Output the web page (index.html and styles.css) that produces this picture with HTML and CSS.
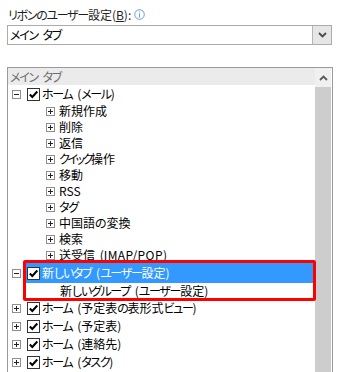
FILE: index.html
```html
<!DOCTYPE html>
<html lang="ja">
<head>
<meta charset="utf-8">
<link rel="stylesheet" href="styles.css">
</head>
<body>
<div class="panel">
  <div class="label-row">
    <span><span class="k">リボンのユーザー</span>設定(<u>B</u>):</span>
    <svg class="info" width="11" height="11" viewBox="0 0 11 11"><circle cx="5.5" cy="5.5" r="4.8" fill="none" stroke="#6c9ad6" stroke-width="1"/><rect x="5" y="2.5" width="1" height="1" fill="#6c9ad6"/><rect x="5" y="4.5" width="1" height="4" fill="#6c9ad6"/></svg>
  </div>
  <div class="combo">
    <span class="combo-text"><span class="k">メイン</span> <span class="k">タブ</span></span>
    <span class="combo-btn"><svg width="9" height="6" viewBox="0 0 9 6"><path d="M1 1 L4.5 4.5 L8 1" fill="none" stroke="#4a4a4a" stroke-width="1.8"/></svg></span>
  </div>
  <div class="tree">
    <div class="list">
      <div class="head"><span class="k">メイン</span> <span class="k">タブ</span></div>
      <div class="row cb lvl0"><span class="exp minus"></span><span class="chk"><svg width="11" height="11" viewBox="0 0 11 11"><path d="M1.8 5.5 L4.3 8 L9.3 2.5" fill="none" stroke="#000" stroke-width="2"/></svg></span><span class="txt"><span class="k">ホーム</span> (<span class="k">メール</span>)</span></div>
      <div class="row lvl1"><span class="exp plus"></span><span class="txt1">新規作成</span></div>
      <div class="row lvl1"><span class="exp plus"></span><span class="txt1">削除</span></div>
      <div class="row lvl1"><span class="exp plus"></span><span class="txt1">返信</span></div>
      <div class="row lvl1"><span class="exp plus"></span><span class="txt1"><span class="k2">クイック</span>操作</span></div>
      <div class="row lvl1"><span class="exp plus"></span><span class="txt1">移動</span></div>
      <div class="row lvl1"><span class="exp plus"></span><span class="txt1">RSS</span></div>
      <div class="row lvl1"><span class="exp plus"></span><span class="txt1"><span class="k">タグ</span></span></div>
      <div class="row lvl1"><span class="exp plus"></span><span class="txt1">中国語の変換</span></div>
      <div class="row lvl1"><span class="exp plus"></span><span class="txt1">検索</span></div>
      <div class="row lvl1"><span class="exp plus"></span><span class="txt1">送受信 (<span class="lat">IMAP/POP</span>)</span></div>
      <div class="row selrow lvl0"><span class="exp minus"></span><span class="sel"><span class="chk"><svg width="11" height="11" viewBox="0 0 11 11"><path d="M1.8 5.5 L4.3 8 L9.3 2.5" fill="none" stroke="#000" stroke-width="2"/></svg></span><span class="txt">新<span class="k">しいタブ</span> (<span class="k">ユーザー</span>設定)</span></span></div>
      <div class="row grp"><span class="txt2">新<span class="k">しいグループ</span> (<span class="k">ユーザー</span>設定)</span></div>
      <div class="row cb lvl0"><span class="exp plus"></span><span class="chk"><svg width="11" height="11" viewBox="0 0 11 11"><path d="M1.8 5.5 L4.3 8 L9.3 2.5" fill="none" stroke="#000" stroke-width="2"/></svg></span><span class="txt"><span class="k">ホーム</span> (予定表<span class="k">の</span>表形式<span class="k">ビュー</span>)</span></div>
      <div class="row cb lvl0"><span class="exp plus"></span><span class="chk"><svg width="11" height="11" viewBox="0 0 11 11"><path d="M1.8 5.5 L4.3 8 L9.3 2.5" fill="none" stroke="#000" stroke-width="2"/></svg></span><span class="txt"><span class="k">ホーム</span> (予定表)</span></div>
      <div class="row cb lvl0"><span class="exp plus"></span><span class="chk"><svg width="11" height="11" viewBox="0 0 11 11"><path d="M1.8 5.5 L4.3 8 L9.3 2.5" fill="none" stroke="#000" stroke-width="2"/></svg></span><span class="txt"><span class="k">ホーム</span> (連絡先)</span></div>
      <div class="row cb lvl0"><span class="exp plus"></span><span class="chk"><svg width="11" height="11" viewBox="0 0 11 11"><path d="M1.8 5.5 L4.3 8 L9.3 2.5" fill="none" stroke="#000" stroke-width="2"/></svg></span><span class="txt"><span class="k">ホーム</span> (<span class="k">タスク</span>)</span></div>
      <div class="mark"></div>
    </div>
    <div class="scroll">
      <div class="sb-up"><svg width="9" height="6" viewBox="0 0 9 6"><path d="M1 5 L4.5 1.5 L8 5" fill="none" stroke="#5a5a5a" stroke-width="1.8"/></svg></div>
      <div class="sb-thumb"></div>
    </div>
  </div>
</div>
</body>
</html>
```
FILE: styles.css
```css
body {
  margin: 0;
  background: #fff;
  font-family: "Noto Sans CJK JP", sans-serif;
  font-size: 12px;
  color: #000;
  font-feature-settings: "palt";
  word-spacing: 2px;
  overflow: hidden;
}
.k {
  letter-spacing: -1.3px;
}
.k2 {
  letter-spacing: -2.4px;
}
.lat {
  letter-spacing: 0.4px;
}
.panel {
  padding: 6px 0 0 7px;
  width: 326px;
}
.label-row {
  display: flex;
  align-items: center;
  height: 18px;
  padding-left: 1px;
  color: #1e1e1e;
  line-height: 18px;
}
.info {
  margin-left: 3px;
  margin-top: -1px;
}
.combo {
  margin-top: 1px;
  width: 325px;
  height: 20px;
  box-sizing: border-box;
  border: 1px solid #ababab;
  display: flex;
  align-items: stretch;
}
.combo-text {
  flex: 1;
  padding-left: 2px;
  line-height: 18px;
}
.combo-btn {
  width: 18px;
  background: #e6e6e6;
  border-left: 1px solid #b5b5b5;
  display: flex;
  align-items: center;
  justify-content: center;
}
.tree {
  margin-top: 22px;
  width: 326px;
  height: 320px;
  box-sizing: border-box;
  border: 1px solid #9a9a9a;
  border-bottom: none;
  display: flex;
  overflow: hidden;
}
.list {
  flex: 1;
  position: relative;
  min-width: 0;
}
.head {
  height: 17px;
  line-height: 17px;
  background: #ebebeb;
  color: #6e6e6e;
  padding-left: 2px;
}
.row {
  display: flex;
  align-items: center;
  height: 16px;
  white-space: nowrap;
  line-height: 16px;
}
.row.cb {
  height: 18px;
}
.row.selrow {
  height: 20px;
}
.lvl0 {
  padding-left: 4px;
}
.lvl1 {
  padding-left: 38px;
}
.grp {
  padding-left: 52px;
}
.exp {
  width: 9px;
  height: 9px;
  box-sizing: border-box;
  border: 1px solid #8f8f8f;
  position: relative;
  flex: none;
  background: #fff;
}
.exp::before {
  content: "";
  position: absolute;
  left: 1px;
  top: 3px;
  width: 5px;
  height: 1px;
  background: #222;
}
.exp.plus::after {
  content: "";
  position: absolute;
  left: 3px;
  top: 1px;
  width: 1px;
  height: 5px;
  background: #222;
}
.chk {
  width: 13px;
  height: 13px;
  box-sizing: border-box;
  border: 1px solid #333;
  background: #fff;
  margin-left: 6px;
  flex: none;
  display: flex;
  align-items: center;
  justify-content: center;
}
.txt {
  margin-left: 2px;
}
.txt1 {
  margin-left: 4px;
}
.sel {
  flex: 1;
  align-self: stretch;
  margin-left: 3px;
  background: #3399ff;
  color: #fff;
  display: flex;
  align-items: center;
}
.sel .chk {
  margin-left: 3px;
}
.mark {
  position: absolute;
  left: 15px;
  top: 192px;
  width: 293px;
  height: 41px;
  box-sizing: border-box;
  border: 3px solid #ff0000;
  border-radius: 2px;
  pointer-events: none;
}
.scroll {
  width: 16px;
  margin-right: 1px;
  display: flex;
  flex-direction: column;
  flex: none;
}
.sb-up {
  height: 19px;
  background: #f0f0f0;
  display: flex;
  align-items: center;
  justify-content: center;
}
.sb-thumb {
  flex: 1;
  background: #cdcdcd;
}
```
